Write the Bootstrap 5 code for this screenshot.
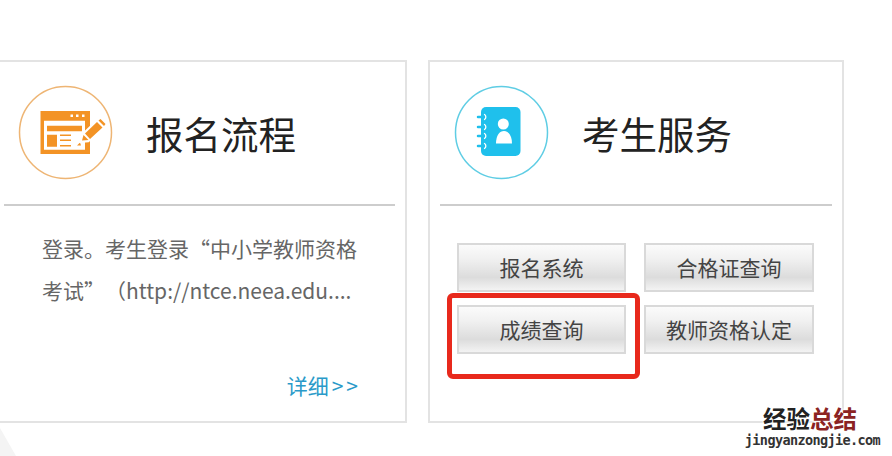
<!DOCTYPE html>
<html lang="zh-CN">
<head>
    <meta charset="UTF-8">
    <meta name="viewport" content="width=device-width, initial-scale=1">
    <title>考生服务</title>
    <link href="https://cdn.jsdelivr.net/npm/bootstrap@5.3.0/dist/css/bootstrap.min.css" rel="stylesheet">
    <style>
        html, body { height: 456px; overflow: hidden; }
        body {
            position: relative;
            background: #fff;
            font-family: "Noto Sans CJK SC", "Liberation Sans", sans-serif;
        }
        .page-wrap { padding-top: 60px; margin-left: -24px; gap: 21px; width: 892px; }
        .svc-card {
            height: 363px;
            border: 2px solid #e3e3e3;
            border-radius: 0;
            background: #fff;
        }
        .svc-left { width: 431px; }
        .svc-right { width: 416px; }
        .svc-head { height: 144px; border-bottom: 2px solid #cdcdcd; padding-top: 23px; }
        .svc-left .svc-head { margin: 0 10px 0 26px; padding-left: 14px; }
        .svc-right .svc-head { margin: 0 10px; padding-left: 14px; }
        .svc-head svg { width: 95px; height: 95px; flex: none; }
        .svc-title { font-size: 37.5px; font-weight: 400; line-height: 95px; color: #222; margin: 0 0 0 33px; }
        .svc-text { margin: 21px 0 0 64px; font-size: 21px; line-height: 42px; color: #666; width: 340px; white-space: nowrap; text-spacing-trim: space-all; }
        .svc-more { margin: 59px 47px 0 0; text-align: right; font-size: 21px; line-height: 30px; color: #2a9ac9; text-decoration: none; display: block; }
        .svc-arrow { letter-spacing: 3px; margin-left: 3px; margin-right: -3px; }
        .svc-btns {
            display: grid;
            grid-template-columns: 169px 170px;
            grid-auto-rows: 49px;
            column-gap: 18px;
            row-gap: 13px;
            margin: 37px 0 0 27px;
        }
        .svc-btn {
            border: 2px solid #d9d9d9;
            border-radius: 0;
            padding: 0;
            font-size: 21px;
            color: #444;
            background: linear-gradient(#fbfbfb, #f1f1f1 30%, #dcdcdc 72%, #f3f3f3);
        }
        .red-box {
            position: absolute;
            left: 447px; top: 293px;
            width: 193px; height: 86px;
            border: 5px solid #e8291c;
            border-radius: 6px;
            pointer-events: none;
        }
        .corner-shape { position: absolute; left: 0; top: 428px; width: 18px; height: 28px; }
        .wm {
            position: absolute;
            left: 742px; top: 404px;
            width: 138px;
            text-align: right;
            text-shadow: 0 0 3px #fff, 0 0 3px #fff, 0 0 3px #fff;
        }
        .wm-cn { font-size: 23.5px; line-height: 28px; font-weight: 700; color: #222; padding-right: 23px; }
        .wm-cn span { color: #8b2323; }
        .wm-en { font-family: "DejaVu Sans Mono", monospace; font-size: 13.5px; line-height: 15px; font-weight: 700; color: #333; white-space: nowrap; letter-spacing: -.62px; padding-top: 1px; margin-left: -3px; }
    </style>
</head>
<body>
    <div class="page-wrap d-flex">
        <div class="svc-card svc-left card">
            <div class="svc-head d-flex">
                <svg viewBox="0 0 95 95">
                    <circle cx="47.5" cy="47.5" r="46" fill="#fff" stroke="#eeb574" stroke-width="1.5"/>
                    <path fill="#f39325" d="M22.500 26H72v43H22.500z"/>
                    <path fill="#fff" d="M26 35.700h41v29H26z"/>
                    <path fill="#f39325" d="M29 40.700h35v5.600H29zM29 49.700h10v12H29zM42 49.500h11V51H42zM42 54.500h11V56H42zM42 60h11v1.500H42zM59 60.500l3-3 1 3z"/>
                    <path fill="#fff" d="M52.500 29.500h2.500V32h-2.500zM58 29.500h2.500V32H58zM64 29.500h2.500V32H64z"/>
                    <path fill="#fff" stroke="#fff" stroke-width="3.500" d="M63.500 56l2-6.500L80 35.500l2.500-2 5 5.500-2.500 2.500L70 55.500z"/>
                    <path fill="#f39325" d="M64 55.500l1.500-5.500 5 5zM67 48.500L79 37l5.500 5.500L72 54z"/>
                    <path fill="#f39325" d="M80.500 35.500l2-1.500 5 5-1.500 2z"/>
                </svg>
                <h2 class="svc-title">报名流程</h2>
            </div>
            <div class="svc-text">登录。考生登录“中小学教师资格<br>考试”（http://ntce.neea.edu....</div>
            <a class="svc-more" href="#">详细<span class="svc-arrow">&gt;&gt;</span></a>
        </div>
        <div class="svc-card svc-right card">
            <div class="svc-head d-flex">
                <svg viewBox="0 0 95 95">
                    <circle cx="47.5" cy="47.5" r="46" fill="#fff" stroke="#5fcde4" stroke-width="1.5"/>
                    <rect x="27" y="22" width="39.500" height="49" rx="5" fill="#1fc0ec"/>
                    <circle cx="49.300" cy="39" r="5.500" fill="#fff"/>
                    <path fill="#fff" d="M42 58.500c0-8 3.500-12.500 8-12.500s8 4.500 8 12.500z"/>
                    <g fill="none" stroke="#1fc0ec" stroke-width="2.500" stroke-linecap="round">
                        <path d="M24 32h7M24 42h7M24 51h7M24 61h7"/>
                    </g>
                    <g fill="none" stroke="#fff" stroke-width="1.300" stroke-linecap="round">
                        <path d="M30.500 29.500a3 3 0 0 1 0 5M30.500 39.500a3 3 0 0 1 0 5M30.500 48.500a3 3 0 0 1 0 5M30.500 58.500a3 3 0 0 1 0 5"/>
                    </g>
                </svg>
                <h2 class="svc-title">考生服务</h2>
            </div>
            <div class="svc-btns">
                <button type="button" class="btn svc-btn">报名系统</button>
                <button type="button" class="btn svc-btn">合格证查询</button>
                <button type="button" class="btn svc-btn">成绩查询</button>
                <button type="button" class="btn svc-btn">教师资格认定</button>
            </div>
        </div>
    </div>

    <div class="red-box"></div>

    <svg class="corner-shape" viewBox="0 0 18 28"><path fill="#f4f4f4" d="M0 0L16 28H0z"/></svg>

    <div class="wm">
        <div class="wm-cn">经验<span>总结</span></div>
        <div class="wm-en">jingyanzongjie.com</div>
    </div>

    <script src="https://cdn.jsdelivr.net/npm/bootstrap@5.3.0/dist/js/bootstrap.bundle.min.js"></script>
</body>
</html>
